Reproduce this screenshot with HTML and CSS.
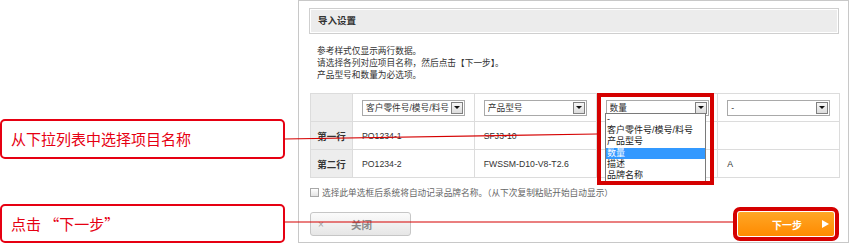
FILE: index.html
```html
<!DOCTYPE html>
<html lang="zh-CN">
<head>
  <meta charset="UTF-8">
  <title>导入设置</title>
  <link rel="stylesheet" href="styles.css">
</head>
<body>

<div class="page">
  <!-- Callouts on the left -->
  <div class="callouts">
    <div class="callout">从下拉列表中选择项目名称</div>
    <div class="callout">点击 “下一步”</div>
  </div>

  <!-- Import settings panel -->
  <div class="panel">
    <div class="panel-head">导入设置</div>

    <div class="notes">
      <p>参考样式仅显示两行数据。</p>
      <p>请选择各列对应项目名称，然后点击【下一步】。</p>
      <p>产品型号和数量为必选项。</p>
    </div>

    <table class="map-table">
      <colgroup>
        <col class="col-head">
        <col class="col-data">
        <col class="col-data">
        <col class="col-data">
        <col class="col-data">
      </colgroup>
      <tr class="pick-row">
        <th></th>
        <td><div class="pick"><span>客户零件号/模号/料号</span><i class="pick-arrow"></i></div></td>
        <td><div class="pick"><span>产品型号</span><i class="pick-arrow"></i></div></td>
        <td><div class="pick"><span>数量</span><i class="pick-arrow"></i></div></td>
        <td><div class="pick"><span>-</span><i class="pick-arrow"></i></div></td>
      </tr>
      <tr>
        <th>第一行</th>
        <td>PO1234-1</td>
        <td>SFJ3-10</td>
        <td></td>
        <td></td>
      </tr>
      <tr>
        <th>第二行</th>
        <td>PO1234-2</td>
        <td>FWSSM-D10-V8-T2.6</td>
        <td></td>
        <td>A</td>
      </tr>
    </table>

    <label class="remember"><span class="check"></span>选择此单选框后系统将自动记录品牌名称。（从下次复制粘贴开始自动显示）</label>

    <div class="actions">
      <button type="button" class="btn-close"><span class="btn-x">×</span>关闭</button>
      <button type="button" class="btn-next">下一步<i class="btn-arrow"></i></button>
    </div>
  </div>

  <!-- Open dropdown of the quantity column -->
  <ul class="dropdown">
    <li>-</li>
    <li>客户零件号/模号/料号</li>
    <li>产品型号</li>
    <li class="selected">数量</li>
    <li>描述</li>
    <li>品牌名称</li>
  </ul>

  <!-- Annotation marks -->
  <div class="focus-box"></div>
  <svg class="leaders" width="849" height="243" viewBox="0 0 849 243">
    <line x1="284" y1="139" x2="597" y2="134" />
    <line x1="284" y1="222" x2="733" y2="222" />
  </svg>
</div>

</body>
</html>
```

FILE: styles.css
```css
* {
  box-sizing: border-box;
}

body {
  margin: 0;
  background: #fff;
  font-family: "Liberation Sans", "Noto Sans CJK SC", sans-serif;
  color: #333;
}

.page {
  position: relative;
  display: flex;
  width: 849px;
  height: 243px;
}

/* Left callouts */
.callouts {
  width: 298px;
  padding-top: 119px;
  display: flex;
  flex-direction: column;
  gap: 45px;
}

.callout {
  width: 285px;
  height: 40px;
  border: 2px solid #e60012;
  border-radius: 5px;
  padding-left: 9px;
  display: flex;
  align-items: center;
  font-family: "Noto Sans CJK SC", sans-serif;
  font-size: 15px;
  color: #e60012;
}

/* Panel */
.panel {
  width: 551px;
  height: 243px;
  border: 1px solid #c8c8c8;
  padding: 7px 9px 0 10px;
}

.panel-head {
  height: 26px;
  border: 1px solid #cfcfcf;
  box-shadow: inset 0 0 0 1px #fff;
  background: #ececec;
  padding-left: 8px;
  font-size: 9.5px;
  font-weight: bold;
  line-height: 24px;
  color: #333;
}

.notes {
  margin: 11px 0 0 8px;
  font-size: 8.7px;
  line-height: 12px;
}
.notes p {
  margin: 0;
}

/* Mapping table */
.map-table {
  margin: 12px 0 0 1px;
  width: 529px;
  table-layout: fixed;
  border-collapse: collapse;
  font-size: 8.7px;
}
.col-head {
  width: 42px;
}
.col-data {
  width: 121.75px;
}

.map-table th,
.map-table td {
  height: 28px;
  border: 1px solid #dcdcdc;
  padding: 0 0 0 9px;
  text-align: left;
  vertical-align: middle;
  white-space: nowrap;
}
.map-table th {
  padding: 0;
  background: #ededed;
  text-align: center;
  font-size: 9.5px;
  font-weight: bold;
}

/* Fake select boxes */
.pick {
  display: flex;
  align-items: center;
  width: 103px;
  height: 16px;
  border: 1px solid #a9a9a9;
  padding: 0 1px 0 3px;
  background: #fff;
}
.pick span {
  flex: 1;
  overflow: hidden;
}
.pick-arrow {
  width: 12px;
  height: 12px;
  border: 1px solid #808080;
  background: linear-gradient(#f7f7f7, #dcdcdc);
  display: flex;
  align-items: center;
  justify-content: center;
}
.pick-arrow::after {
  content: "";
  border-top: 3px solid #111;
  border-left: 3px solid transparent;
  border-right: 3px solid transparent;
}

/* Remember checkbox */
.remember {
  display: flex;
  align-items: center;
  height: 12px;
  margin-top: 8px;
  font-size: 8.7px;
  color: #666;
}
.check {
  width: 9px;
  height: 9px;
  margin: 0 3px 0 1px;
  border: 1px solid #a8a8a8;
  background: linear-gradient(#fff, #e4e4e4);
}

/* Buttons */
.actions {
  display: flex;
  justify-content: space-between;
  margin-top: 14px;
  padding: 0 5px 0 1px;
}

.btn-close {
  display: flex;
  align-items: center;
  width: 101px;
  height: 24px;
  padding: 0 0 0 7px;
  border: 1px solid #c6c6c6;
  border-radius: 3px;
  background: linear-gradient(#fbfbfb, #e6e6e6);
  font-family: inherit;
  font-size: 10.5px;
  font-weight: bold;
  color: #8a8a8a;
}
.btn-x {
  width: 33px;
  font-size: 10px;
  font-weight: normal;
  color: #a0a0a0;
  text-align: left;
}

.btn-next {
  display: flex;
  align-items: center;
  width: 96px;
  height: 24px;
  padding: 0 5px 0 34px;
  border: none;
  border-radius: 2px;
  background: linear-gradient(#ffa726, #ff8a00);
  font-family: inherit;
  font-size: 10px;
  font-weight: bold;
  color: #fff;
  outline: 4px solid #d50000;
  outline-offset: 1px;
}
.btn-arrow {
  margin-left: auto;
  border-left: 7px solid #fff;
  border-top: 4px solid transparent;
  border-bottom: 4px solid transparent;
}

/* Open dropdown list */
.dropdown {
  position: absolute;
  left: 605px;
  top: 113px;
  width: 101px;
  margin: 0;
  padding: 0;
  list-style: none;
  border: 1px solid #7a7a7a;
  background: #fff;
  font-size: 9px;
  line-height: 11.2px;
  color: #222;
}
.dropdown li {
  padding-left: 1px;
  white-space: nowrap;
}
.dropdown .selected {
  background: #3399ff;
  color: #fff;
}

/* Annotation marks */
.focus-box {
  position: absolute;
  left: 597px;
  top: 93px;
  width: 117px;
  height: 92px;
  border: 4px solid #d50000;
}

.leaders {
  position: absolute;
  left: 0;
  top: 0;
  pointer-events: none;
}
.leaders line {
  stroke: #d50000;
  stroke-width: 1.2;
}
```
